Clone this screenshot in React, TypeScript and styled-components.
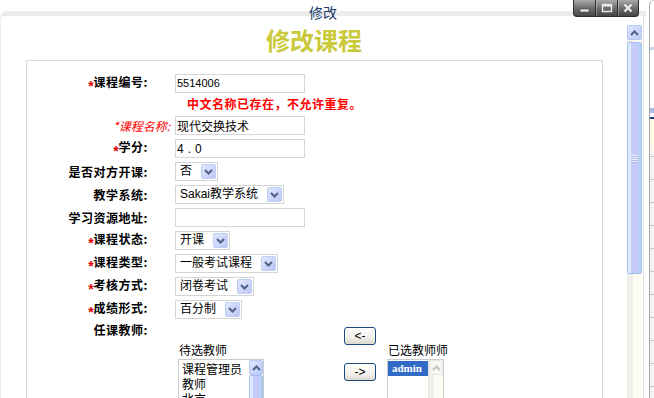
import React from "react";
import styled, { createGlobalStyle } from "styled-components";

// Global
const GlobalStyle = createGlobalStyle`
  html, body {
    margin: 0;
    padding: 0;
    background: #fff;
  }
  body {
    font-family: "Noto Sans CJK SC", "Liberation Sans", sans-serif;
    font-size: 12px;
    color: #000;
  }
  * {
    box-sizing: border-box;
  }
`;

const FIELD_FONT = `"Liberation Sans", "Noto Sans CJK SC", sans-serif`;

interface FieldRow {
  label: string;
  star?: boolean;
  soft?: boolean;
  kind: "input" | "select";
  value: string;
  size?: number;
  spaced?: boolean;
}

const rowsBefore: FieldRow[] = [
  { label: "课程编号:", star: true, kind: "input", value: "5514006", size: 11 },
];

const rowsAfter: FieldRow[] = [
  { label: "*课程名称:", soft: true, kind: "input", value: "现代交换技术" },
  { label: "学分:", star: true, kind: "input", value: "4.0", spaced: true },
  { label: "是否对方开课:", kind: "select", value: "否" },
  { label: "教学系统:", kind: "select", value: "Sakai教学系统" },
  { label: "学习资源地址:", kind: "input", value: "" },
  { label: "课程状态:", star: true, kind: "select", value: "开课" },
  { label: "课程类型:", star: true, kind: "select", value: "一般考试课程" },
  { label: "考核方式:", star: true, kind: "select", value: "闭卷考试" },
  { label: "成绩形式:", star: true, kind: "select", value: "百分制" },
];

const candidates = ["课程管理员", "教师", "北京"];
const chosen = ["admin"];

const ChevronDown = () => (
  <svg width="9" height="6" viewBox="0 0 9 6">
    <polyline points="1,1 4.5,4.5 8,1" fill="none" stroke="#4d6185" strokeWidth="2" />
  </svg>
);

const ChevronUp = ({ color = "#4d6185" }: { color?: string }) => (
  <svg width="9" height="6" viewBox="0 0 9 6">
    <polyline points="1,5 4.5,1.5 8,5" fill="none" stroke={color} strokeWidth="2" />
  </svg>
);

class App extends React.Component {
  renderField(row: FieldRow) {
    if (row.kind === "select") {
      return (
        <SelectBox>
          <SelectValue>{row.value}</SelectValue>
          <DropButton>
            <ChevronDown />
          </DropButton>
        </SelectBox>
      );
    }

    return <TextInput readOnly defaultValue={row.value} $size={row.size} $spaced={row.spaced} />;
  }

  renderRow(row: FieldRow, h?: number) {
    return (
      <Row key={row.label} $h={h}>
        <Label $soft={row.soft}>
          {row.star && <Star>*</Star>}
          {row.label}
        </Label>
        <Field>{this.renderField(row)}</Field>
      </Row>
    );
  }

  public render() {
    return (
      <Screen>
        <GlobalStyle />
        <Window>
          <Caption>修改</Caption>
          <Controls>
            <ControlButton $w={21}>
              <svg width="11" height="10" viewBox="0 0 11 10">
                <rect x="1" y="6" width="9" height="3" fill="#ececec" stroke="#3a3a3a" strokeWidth="0.6" />
              </svg>
            </ControlButton>
            <ControlButton $w={22}>
              <svg width="12" height="10" viewBox="0 0 12 10">
                <rect x="1.5" y="1.5" width="9" height="7" fill="none" stroke="#ececec" strokeWidth="1.4" />
                <rect x="1.5" y="1.5" width="9" height="2" fill="#ececec" />
              </svg>
            </ControlButton>
            <ControlButton $w={21}>
              <svg width="10" height="10" viewBox="0 0 10 10">
                <path d="M1.5 1.5 L8.5 8.5 M8.5 1.5 L1.5 8.5" stroke="#ececec" strokeWidth="2.2" />
              </svg>
            </ControlButton>
          </Controls>
          <Frame>
            <Page>
              <Heading>修改课程</Heading>
              <FormBox>
                {rowsBefore.map((r) => this.renderRow(r, 22))}
                <Row $h={20}>
                  <span />
                  <ErrorText>中文名称已存在，不允许重复。</ErrorText>
                </Row>
                {rowsAfter.map((r) => this.renderRow(r))}
                <Row $h={80} $top>
                  <Label>任课教师:</Label>
                  <Picker>
                    <PickColumn $left={6}>
                      <PickCaption>待选教师</PickCaption>
                      <ListBox $w={86}>
                        <ListItems>
                          {candidates.map((c) => (
                            <ListItem key={c}>{c}</ListItem>
                          ))}
                        </ListItems>
                        <MiniScroll>
                          <ArrowBox>
                            <ChevronUp />
                          </ArrowBox>
                          <Thumb />
                        </MiniScroll>
                      </ListBox>
                    </PickColumn>
                    <MoveColumn>
                      <MoveButton>&lt;-</MoveButton>
                      <MoveButton>-&gt;</MoveButton>
                    </MoveColumn>
                    <PickColumn $left={11}>
                      <PickCaption>已选教师师</PickCaption>
                      <ListBox $w={57}>
                        <ListItems>
                          {chosen.map((c) => (
                            <ListItem key={c} $selected>
                              {c}
                            </ListItem>
                          ))}
                        </ListItems>
                        <MiniScroll $disabled>
                          <ArrowBox $disabled>
                            <ChevronUp color="#c4c4c4" />
                          </ArrowBox>
                        </MiniScroll>
                      </ListBox>
                    </PickColumn>
                  </Picker>
                </Row>
              </FormBox>
            </Page>
            <ScrollTrack>
              <ArrowBox>
                <ChevronUp />
              </ArrowBox>
              <Thumb $h={232}>
                <Grip>
                  <i />
                  <i />
                  <i />
                  <i />
                </Grip>
              </Thumb>
            </ScrollTrack>
            <EdgeGap />
          </Frame>
        </Window>
        <SideStrip>
          <SideEdge />
        </SideStrip>
      </Screen>
    );
  }
}

// Window chrome
const Screen = styled.div`
  display: flex;
  width: 654px;
  height: 398px;
  overflow: hidden;
  background: #fff;
`;

const Window = styled.div`
  position: relative;
  width: 646px;
  height: 100%;
  display: flex;
  flex-direction: column;
`;

const Caption = styled.div`
  position: absolute;
  top: 3px;
  left: 0;
  right: 0;
  z-index: 1;
  text-align: center;
  font-size: 14px;
  line-height: 18px;
  color: #173b6a;
`;

const Controls = styled.div`
  position: absolute;
  top: 0;
  right: 7px;
  z-index: 2;
  display: flex;
  height: 17px;
  border: 1px solid #2e2e2e;
  border-top: none;
  border-radius: 0 0 4px 4px;
  overflow: hidden;
  background: linear-gradient(#a8a8a8, #707070 50%, #454545);
`;

const ControlButton = styled.div<{ $w: number }>`
  width: ${(p) => p.$w}px;
  display: flex;
  align-items: center;
  justify-content: center;

  & + & {
    border-left: 1px solid #2e2e2e;
    box-shadow: inset 1px 0 0 rgba(255, 255, 255, 0.3);
  }
`;

const Frame = styled.div`
  flex: 1;
  min-height: 0;
  margin-top: 11px;
  display: flex;
  border-top: 5px solid #ececec;
  border-left: 1px solid #efefef;
  border-top-left-radius: 7px;
`;

const Page = styled.div`
  width: 626px;
  display: flex;
  flex-direction: column;
`;

const Heading = styled.h1`
  margin: 9px 0 0;
  font: bold 24px/30px "Noto Sans CJK SC", sans-serif;
  color: #c9c93a;
  text-align: center;
`;

// Form
const FormBox = styled.div`
  margin: 5px 0 0 25px;
  width: 577px;
  flex: 1;
  border: 1px solid #dadada;
  border-bottom: none;
  padding-top: 11px;
`;

const Row = styled.div<{ $h?: number; $top?: boolean }>`
  display: grid;
  grid-template-columns: 145px 1fr;
  align-items: ${(p) => (p.$top ? "start" : "center")};
  height: ${(p) => p.$h ?? 23}px;
  line-height: 18px;
`;

const Label = styled.div<{ $soft?: boolean }>`
  text-align: right;
  white-space: nowrap;
  padding-right: ${(p) => (p.$soft ? 2 : 24)}px;
  font-size: 12px;
  font-weight: ${(p) => (p.$soft ? 400 : 700)};
  font-style: ${(p) => (p.$soft ? "italic" : "normal")};
  letter-spacing: ${(p) => (p.$soft ? 0 : 0.5)}px;
  color: ${(p) => (p.$soft ? "#ff0000" : "#000")};
`;

const Star = styled.span`
  color: #e00000;
  font: bold 14px "Liberation Sans", sans-serif;
  vertical-align: -4px;
  letter-spacing: 0;
`;

const Field = styled.div`
  display: flex;
  align-items: center;
  padding-left: 3px;
`;

const ErrorText = styled.div`
  padding-left: 15px;
  color: #ff0000;
  font-weight: 700;
  font-size: 12px;
  letter-spacing: 0.5px;
  white-space: nowrap;
`;

const TextInput = styled.input<{ $size?: number; $spaced?: boolean }>`
  width: 130px;
  height: 19px;
  margin: 0;
  padding: 0 1px;
  border: 1px solid #d6d6d6;
  outline: none;
  background: #fff;
  color: #000;
  font-family: ${FIELD_FONT};
  font-size: ${(p) => p.$size ?? 12}px;
  letter-spacing: ${(p) => (p.$spaced ? 4 : 0)}px;
`;

const SelectBox = styled.div`
  display: inline-flex;
  align-items: center;
  height: 19px;
  padding: 0 1px 0 4px;
  border: 1px solid #d4d4d4;
  background: #fff;
`;

const SelectValue = styled.span`
  font: 12px/17px ${FIELD_FONT};
  white-space: nowrap;
`;

const DropButton = styled.span`
  margin-left: 9px;
  width: 15px;
  height: 15px;
  display: flex;
  align-items: center;
  justify-content: center;
  border: 1px solid #bccdf7;
  border-radius: 2px;
  background: linear-gradient(135deg, #e2e8fe, #bcc6f8);
`;

// Teacher picker
const Picker = styled.div`
  display: flex;
  align-items: flex-start;
`;

const PickColumn = styled.div<{ $left: number }>`
  margin-left: ${(p) => p.$left}px;
  padding-top: 22px;
  display: flex;
  flex-direction: column;
`;

const PickCaption = styled.div`
  font-size: 12px;
  line-height: 14px;
  padding-left: 1px;
  margin-bottom: 2px;
  white-space: nowrap;
`;

const ListBox = styled.div<{ $w: number }>`
  width: ${(p) => p.$w}px;
  height: 90px;
  display: flex;
  border: 1px solid #cccccc;
  background: #fff;
`;

const ListItems = styled.div`
  flex: 1;
  min-width: 0;
  padding-top: 1px;
`;

const ListItem = styled.div<{ $selected?: boolean }>`
  height: 15px;
  line-height: 15px;
  padding-left: ${(p) => (p.$selected ? 4 : 3)}px;
  white-space: nowrap;
  font-size: ${(p) => (p.$selected ? 11 : 12)}px;
  font-family: ${(p) => (p.$selected ? `"Liberation Serif", serif` : `"Noto Sans CJK SC", sans-serif`)};
  font-weight: ${(p) => (p.$selected ? 700 : 400)};
  color: ${(p) => (p.$selected ? "#fff" : "#000")};
  background: ${(p) => (p.$selected ? "#316ac5" : "transparent")};
`;

const MiniScroll = styled.div<{ $disabled?: boolean }>`
  width: 15px;
  display: flex;
  flex-direction: column;
  border-left: 1px solid ${(p) => (p.$disabled ? "#e4e4e0" : "#fff")};
  background: ${(p) =>
    p.$disabled ? "linear-gradient(to right, #f1f0ea 0 5px, #fdfcf4 5px)" : "#fff"};
`;

const MoveColumn = styled.div`
  margin-left: 80px;
  padding-top: 6px;
  display: flex;
  flex-direction: column;
  gap: 18px;
`;

const MoveButton = styled.button`
  width: 32px;
  height: 18px;
  padding: 0;
  border: 1px solid #1c4a7e;
  border-radius: 3px;
  background: linear-gradient(#ffffff, #f3f2ec 60%, #dcd9cd);
  color: #000;
  font: 12px/16px "Liberation Sans", sans-serif;
`;

// Scrollbar
const ScrollTrack = styled.div`
  width: 15px;
  margin-top: 9px;
  display: flex;
  flex-direction: column;
  gap: 2px;
  background: linear-gradient(to right, #efeee8 0 6px, #fdfcf3 6px);
`;

const ArrowBox = styled.div<{ $disabled?: boolean }>`
  flex: 0 0 15px;
  height: 15px;
  display: flex;
  align-items: center;
  justify-content: center;
  border: 1px solid ${(p) => (p.$disabled ? "#e6e5de" : "#b5c9f4")};
  border-radius: 2px;
  background: ${(p) =>
    p.$disabled ? "#f7f6f1" : "linear-gradient(135deg, #e0e7fe, #bdc8f8)"};
`;

const Thumb = styled.div<{ $h?: number }>`
  flex: ${(p) => (p.$h ? `0 0 ${p.$h}px` : "1")};
  display: flex;
  align-items: center;
  justify-content: center;
  border: 1px solid #a3c0ee;
  border-radius: 2px;
  background: linear-gradient(
    to right,
    #dfeafe 0 3px,
    #c9cbfb 3px,
    #c6c8fa calc(100% - 3px),
    #b8d2f4 calc(100% - 3px)
  );
`;

const Grip = styled.div`
  display: flex;
  flex-direction: column;
  gap: 1px;

  i {
    display: block;
    width: 7px;
    height: 1px;
    background: #eef2fe;
    box-shadow: 0 1px 0 #aeb6ea;
  }
`;

const EdgeGap = styled.div`
  width: 3px;
  margin-left: 1px;
  border-left: 1px solid #e2e2e2;
`;

const SideStrip = styled.div`
  width: 8px;
  display: flex;
`;

const SideEdge = styled.div`
  flex: 1;
  margin-left: 3px;
  border-left: 1px solid #a9a9a9;
  border-top: 1px solid #c4c4c4;
  border-top-left-radius: 10px;
  background:
    linear-gradient(
      #fff 0 46px,
      #c9d6ea 46px 49px,
      #fff 49px 107px,
      #a9bde0 107px 112px,
      #fff 112px 116px,
      #1d3f8a 116px 118px,
      #fdf8e8 118px 150px,
      transparent 150px
    ),
    repeating-linear-gradient(#f3f3f3 0 22px, #c6c6c6 22px 23px);
  background-position: 0 0, 0 18px;
`;

export default App;
